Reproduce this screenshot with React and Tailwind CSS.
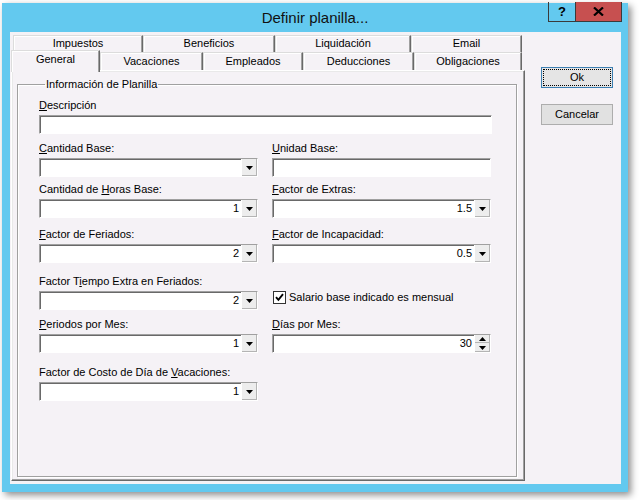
import React from "react";

function U({ children }) {
  return <span className="underline underline-offset-[1px] decoration-1">{children}</span>;
}

function Label({ children, mt = "" }) {
  return (
    <div className={`h-[13px] leading-[13px] text-[11px] mb-[3px] whitespace-nowrap ${mt}`}>{children}</div>
  );
}

const frame =
  "h-[19px] bg-white border border-[#a0a0a0] border-r-white border-b-white shadow-[inset_1px_1px_0_#696969] flex";

function Arrow({ up }) {
  return (
    <svg width="7" height="4" viewBox="0 0 7 4">
      <path d={up ? "M0 4H7L3.5 0Z" : "M0 0H7L3.5 4Z"} fill="#000" />
    </svg>
  );
}

function Combo({ value = "", w = "w-[219px]" }) {
  return (
    <div className={`${w} ${frame}`}>
      <div className="flex-1 text-right pr-[2px] text-[11px] leading-[17px]">{value}</div>
      <div className="w-[16px] h-full bg-[#ededed] border-l border-l-white shadow-[inset_-1px_-1px_0_#b4b4b4] flex items-center justify-center">
        <Arrow />
      </div>
    </div>
  );
}

function TextBox({ w = "w-[219px]" }) {
  return <div className={`${w} ${frame}`} />;
}

function Spin({ value }) {
  return (
    <div className={`w-[219px] ${frame}`}>
      <div className="flex-1 text-right pr-[2px] text-[11px] leading-[17px]">{value}</div>
      <div className="w-[16px] h-full flex flex-col">
        <div className="h-[8px] bg-[#ededed] border-l border-l-white shadow-[inset_-1px_-1px_0_#b4b4b4] flex items-center justify-center">
          <Arrow up />
        </div>
        <div className="flex-1 bg-[#ededed] border-l border-l-white shadow-[inset_-1px_-1px_0_#b4b4b4] flex items-center justify-center">
          <Arrow />
        </div>
      </div>
    </div>
  );
}

function Tab({ label, w, h = "h-[17px]" }) {
  return (
    <div
      className={`${w} ${h} border-t border-l border-[#dcdcdc] border-r border-r-[#696969] shadow-[inset_-1px_0_0_#a0a0a0,inset_1px_1px_0_#fff] text-center text-[11px] leading-[15px] whitespace-nowrap`}
    >
      {label}
    </div>
  );
}

export default function App() {
  return (
    <div className="w-[639px] h-[500px] bg-white overflow-hidden font-['Liberation_Sans',Arial,sans-serif] text-black">
      <div className="ml-[2px] mt-[3px] w-[626px] h-[489px] bg-[#63c9ef] flex flex-col relative shadow-[3px_3px_7px_rgba(0,0,0,0.45)]">
        {/* title bar */}
        <div className="h-[29px] flex items-center justify-center pt-[1px]">
          <span className="text-[15px] leading-[18px] text-[#111]">Definir planilla...</span>
        </div>
        <div className="absolute top-[-1px] right-[6px] flex h-[20px] border border-[#3a3a3a] border-t-0">
          <div className="w-[27px] h-full flex items-center justify-center border-r border-[#3a3a3a] text-[13px] font-bold leading-none">
            ?
          </div>
          <div className="w-[45px] h-full bg-[#c75050] flex items-center justify-center">
            <svg width="11" height="9" viewBox="0 0 11 9">
              <path d="M1 0.5L10 8.5M10 0.5L1 8.5" stroke="#000" strokeWidth="2.2" />
            </svg>
          </div>
        </div>

        {/* client */}
        <div className="ml-[8px] w-[611px] h-[452px] bg-[#f5f2f6] flex pl-[1px] pt-[3px]">
          <div className="w-[514px] flex flex-col">
            {/* tab row 1 */}
            <div className="flex ml-[2px] h-[17px]">
              <Tab label="Impuestos" w="w-[130px]" />
              <Tab label="Beneficios" w="w-[132px]" />
              <Tab label="Liquidación" w="w-[136px]" />
              <Tab label="Email" w="w-[111px]" />
            </div>
            {/* tab row 2 */}
            <div className="flex h-[18px] items-start">
              <div className="relative z-10 -mt-[2px] w-[89px] h-[22px] bg-[#f5f2f6] border-t border-l border-[#dcdcdc] border-r border-r-[#696969] shadow-[inset_-1px_0_0_#a0a0a0,inset_1px_1px_0_#fff] text-center text-[11px] leading-[13px] pt-[2px]">
                General
              </div>
              <Tab label="Vacaciones" w="w-[103px]" h="h-[18px] pt-[1px]" />
              <Tab label="Empleados" w="w-[100px]" h="h-[18px] pt-[1px]" />
              <Tab label="Deducciones" w="w-[111px]" h="h-[18px] pt-[1px]" />
              <Tab label="Obligaciones" w="w-[108px]" h="h-[18px] pt-[1px]" />
            </div>
            {/* panel */}
            <div className="w-[514px] h-[411px] border border-white border-r-[#696969] border-b-[#696969] shadow-[inset_-1px_-1px_0_#a0a0a0,inset_1px_1px_0_#e9e9e9] pl-[5px] pt-[7px]">
              <fieldset className="w-[500px] h-[399px] border border-[#a0a0a0] shadow-[inset_1px_1px_0_#fff,1px_1px_0_#fff] pl-[21px] pt-[8px]">
                <legend className="ml-[6px] px-[1px] text-[11px] leading-[13px]">Información de Planilla</legend>

                <Label>
                  <U>D</U>escripción
                </Label>
                <TextBox w="w-[453px]" />

                <div className="flex gap-[14px] mt-[8px]">
                  <div>
                    <Label>
                      <U>C</U>antidad Base:
                    </Label>
                    <Combo />
                  </div>
                  <div>
                    <Label>
                      <U>U</U>nidad Base:
                    </Label>
                    <TextBox />
                  </div>
                </div>

                <div className="flex gap-[14px] mt-[6px]">
                  <div>
                    <Label>
                      Cantidad de <U>H</U>oras Base:
                    </Label>
                    <Combo value="1" />
                  </div>
                  <div>
                    <Label>
                      <U>F</U>actor de Extras:
                    </Label>
                    <Combo value="1.5" />
                  </div>
                </div>

                <div className="flex gap-[14px] mt-[10px]">
                  <div>
                    <Label>
                      <U>F</U>actor de Feriados:
                    </Label>
                    <Combo value="2" />
                  </div>
                  <div>
                    <Label>
                      <U>F</U>actor de Incapacidad:
                    </Label>
                    <Combo value="0.5" />
                  </div>
                </div>

                <div className="flex gap-[14px] mt-[12px]">
                  <div>
                    <Label>
                      Factor T<U>i</U>empo Extra en Feriados:
                    </Label>
                    <Combo value="2" />
                  </div>
                  <div className="pt-[16px]">
                    <div className="h-[19px] flex items-start ml-[1px]">
                      <div className="w-[13px] h-[13px] bg-white border border-[#333] flex items-center justify-center">
                        <svg width="9" height="9" viewBox="0 0 9 9">
                          <path d="M1 4.2L3.4 6.8L8 1.2" stroke="#000" strokeWidth="1.9" fill="none" />
                        </svg>
                      </div>
                      <span className="ml-[3px] text-[11px] leading-[13px] whitespace-nowrap">
                        Salario base indicado es mensual
                      </span>
                    </div>
                  </div>
                </div>

                <div className="flex gap-[14px] mt-[8px]">
                  <div>
                    <Label>
                      <U>P</U>eriodos por Mes:
                    </Label>
                    <Combo value="1" />
                  </div>
                  <div>
                    <Label>
                      <U>D</U>ías por Mes:
                    </Label>
                    <Spin value="30" />
                  </div>
                </div>

                <div className="mt-[13px]">
                  <Label>
                    Factor de Costo de Día de <U>V</U>acaciones:
                  </Label>
                  <Combo value="1" />
                </div>
              </fieldset>
            </div>
          </div>

          {/* buttons */}
          <div className="ml-[16px] mt-[32px] flex flex-col">
            <div className="w-[72px] h-[21px] bg-[#e5e5e5] border border-[#3c7fb1] p-[1px]">
              <div className="w-full h-full border border-dotted border-black flex items-center justify-center text-[11px] leading-none">
                Ok
              </div>
            </div>
            <div className="mt-[16px] w-[72px] h-[21px] bg-[#e1e1e1] border border-[#adadad] flex items-center justify-center text-[11px] leading-none">
              Cancelar
            </div>
          </div>
        </div>
      </div>
    </div>
  );
}
